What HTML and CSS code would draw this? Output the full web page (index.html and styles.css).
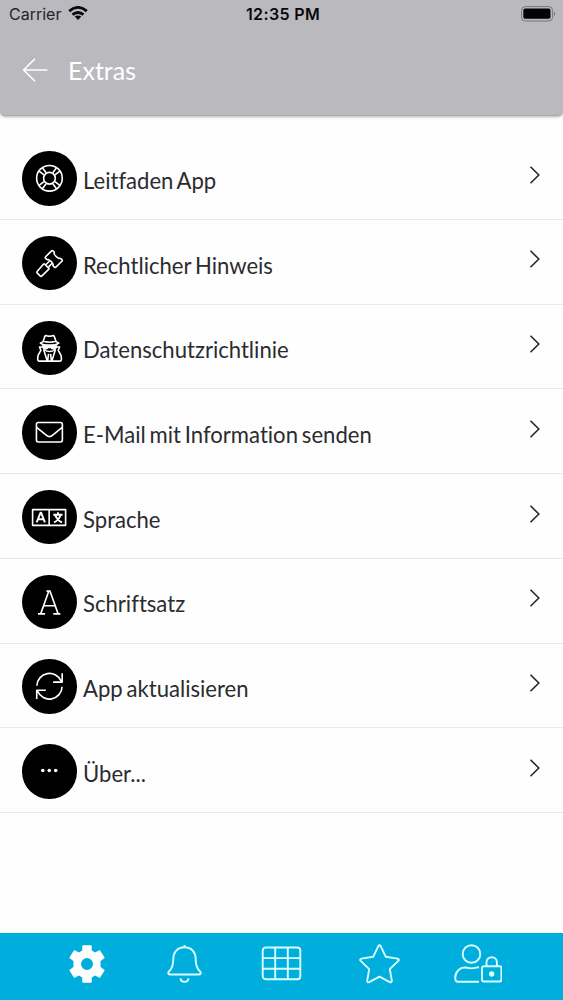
FILE: index.html
```html
<!DOCTYPE html>
<html lang="de">
<head>
<meta charset="utf-8">
<title>Extras</title>
<link rel="stylesheet" href="styles.css">
</head>
<body>
<div class="app">
  <header class="header">
    <div class="status">
      <div class="carrier"><span>Carrier</span>
        <svg width="20" height="15" viewBox="0 0 20 15"><g fill="none" stroke="#08080e" stroke-width="2.8"><path d="M1.2 5.1Q10-2.3 18.8 5.1"/><path d="M4.5 8.7Q10 4.2 15.5 8.7"/></g><path d="M6.7 10.6Q10 8.2 13.3 10.6L10 14z" fill="#08080e"/></svg>
      </div>
      <span class="clock">12:35 PM</span>
      <svg class="battery" width="36" height="16" viewBox="0 0 36 16"><rect x=".6" y=".6" width="31" height="14.4" rx="3.8" fill="none" stroke="#77777d"/><rect x="2.3" y="2.6" width="27.2" height="10.2" rx="1.8" fill="#020207"/><path d="M33 5.5q2 2.3 0 4.6z" fill="#66666c"/></svg>
    </div>
    <div class="titlebar">
      <svg width="26" height="26" viewBox="0 0 26 26" fill="none" stroke="#fff" stroke-width="1.6"><path d="M13 1.8L1.6 13 13 24.2M1.6 13H25.4"/></svg>
      <h1>Extras</h1>
    </div>
  </header>

  <main class="list">
    <a class="row">
      <svg class="icon" viewBox="0 0 54 54"><circle cx="27.2" cy="27" r="12.7"/><circle cx="27.2" cy="27" r="5.8"/><path d="M16.9 20l4.9 3.7M20.2 16.7l3.7 4.9M34.2 16.7l-3.7 4.9M37.5 20l-4.9 3.7M16.9 34l4.9-3.7M20.2 37.3l3.7-4.9M34.2 37.3l-3.7-4.9M37.5 34l-4.9-3.7"/></svg>
      <span class="label">Leitfaden App</span>
      <svg class="chevron" viewBox="0 0 12 20"><path d="M1.5 1.8L9.8 10 1.5 18.2"/></svg>
    </a>
    <a class="row">
      <svg class="icon" viewBox="0 0 54 54"><path d="M29 15l-5.6 5.6q-.7.8 0 1.6l.8.8q.8.7 1.8.3c2.2.8 3.9 2.5 4.9 4.7-.4 1-.2 1.500.3 2l.8.8q.8.7 1.600 0l5.900-5.800q.8-.8 0-1.600l-1-1q-.9-.7-2-.2c-2.100-.9-3.700-2.500-4.700-4.600.4-.9.400-1.500-.3-2.200l-.8-.6q-.9-.6-1.700.2zM27.100 25l-3.200 3.200M29.600 27.300l-3.200 3.300M22.300 27.700l4.100 4.100q.6.700 0 1.300l-6.700 6.400q-.9.900-1.800 0l-2.700-2.700q-.9-.9 0-1.800l6.200-7.200q.5-.5.9-.1z"/></svg>
      <span class="label">Rechtlicher Hinweis</span>
      <svg class="chevron" viewBox="0 0 12 20"><path d="M1.5 1.8L9.8 10 1.5 18.2"/></svg>
    </a>
    <a class="row">
      <svg class="icon" viewBox="0 0 54 54"><path d="M20.800 20.500l1.800-5.200q.7-1.300 2-.7 2.700 1 5.400 0 1.300-.6 2 .7l1.800 5.200q2.200.7 2.600 1.500c-3.500 2.800-14.700 2.800-18.200 0q.4-.8 2.600-1.500zM20.600 19.800q6.700 2.400 13.400 0"/><path d="M20.300 24c.2 3.200 2.700 6.200 7 6.200s6.800-3 7-6.200"/><path d="M21 24.700q6.300-1.200 12.600 0l-.5 2.200q-2.500 1.600-4.500-.7h-2.600q-2 2.300-4.500.7z" fill="#fff"/><path d="M20.300 25.700h-3l1.400 3.300-2.400 4.400q-.7 1.500-.7 3v2.100q0 1.300 1.300 1.300h20.800q1.300 0 1.300-1.300v-2.100q0-1.500-.7-3L35.900 29l1.400-3.300h-3M21.500 28.500l3.600 11.300M33.100 28.500l-3.600 11.300M26.300 32.500l-.8 6.500M28.300 32.500l.8 6.500"/></svg>
      <span class="label">Datenschutzrichtlinie</span>
      <svg class="chevron" viewBox="0 0 12 20"><path d="M1.5 1.8L9.8 10 1.5 18.2"/></svg>
    </a>
    <a class="row">
      <svg class="icon" viewBox="0 0 54 54"><rect x="14.300" y="17.300" width="25.700" height="19.300" rx="1.800"/><path d="M14.500 22.200l9.800 7.800q2.900 2.500 5.800 0l9.700-7.800"/></svg>
      <span class="label">E-Mail mit Information senden</span>
      <svg class="chevron" viewBox="0 0 12 20"><path d="M1.5 1.8L9.8 10 1.5 18.2"/></svg>
    </a>
    <a class="row">
      <svg class="icon" viewBox="0 0 54 54"><path d="M10.500 19.400h32.700v15.600H10.500zM26.900 19.400V35"/><path d="M14.500 32l3.800-9.400h.7L22.700 32M15.900 28.900h5.500M31 24.500h9.200M35.600 22v2.500M38.300 24.800q-1.800 5.200-6.600 7.300M32.900 24.800q2 5.100 6.700 7.300" stroke-width="1.900"/></svg>
      <span class="label">Sprache</span>
      <svg class="chevron" viewBox="0 0 12 20"><path d="M1.5 1.8L9.8 10 1.5 18.2"/></svg>
    </a>
    <a class="row">
      <svg class="icon" viewBox="0 0 54 54"><path d="M18.500 38.500l8-22.500h1.300l8 22.500M21.400 30.500h11.700M15.900 38.500h7M31 38.500h7M24.300 16h3.300"/></svg>
      <span class="label">Schriftsatz</span>
      <svg class="chevron" viewBox="0 0 12 20"><path d="M1.5 1.8L9.8 10 1.5 18.2"/></svg>
    </a>
    <a class="row">
      <svg class="icon" viewBox="0 0 54 54"><path d="M14.700 26.500A12.600 12.600 0 0 1 38.900 22M39.800 14.200v8.700h-9M39.700 27.500A12.600 12.600 0 0 1 15.500 32M14.600 39.700V31h9"/></svg>
      <span class="label">App aktualisieren</span>
      <svg class="chevron" viewBox="0 0 12 20"><path d="M1.5 1.8L9.8 10 1.5 18.2"/></svg>
    </a>
    <a class="row">
      <svg class="icon" viewBox="0 0 54 54"><g fill="#fff" stroke="none"><circle cx="20.600" cy="26.300" r="1.750"/><circle cx="27" cy="26.300" r="1.750"/><circle cx="33.400" cy="26.300" r="1.750"/></g></svg>
      <span class="label">Über...</span>
      <svg class="chevron" viewBox="0 0 12 20"><path d="M1.5 1.8L9.8 10 1.5 18.2"/></svg>
    </a>
  </main>

  <nav class="tabs">
    <svg viewBox="0 0 48 40"><path fill="#fff" fill-rule="evenodd" stroke="#fff" stroke-width="1.500" d="M20 2h8v5l4 2.300 4.500-2.300 4.300 6.600-4 3.100v6.600l4 3.100-4.300 6.600-4.500-2.300L28 33v5h-8v-5l-4-2.300-4.500 2.300-4.300-6.600 4-3.100v-6.600l-4-3.100L11.500 7 16 9.300 20 7zM24 13.300a6.700 6.700 0 1 0 0 13.400 6.700 6.700 0 0 0 0-13.400z"/></svg>
    <svg viewBox="0 0 48 40"><path d="M23.500 1v2.300M23.500 3.300c-7 0-11.200 4.800-11.200 11.600 0 7-1.300 9.600-4.200 12.300-1.700 1.700-.8 3.300 1.500 3.300h27.800c2.300 0 3.200-1.600 1.500-3.300-2.900-2.700-4.200-5.300-4.200-12.300C34.700 8.100 30.500 3.300 23.500 3.300zM19.500 34.300c.5 4.700 7.500 4.700 8 0"/></svg>
    <svg viewBox="0 0 48 40"><rect x="4.700" y="3.500" width="37.600" height="31.800" rx="3"/><path d="M17.200 3.500v31.800M29.800 3.500v31.800M4.700 14.100h37.600M4.700 24.700h37.600"/></svg>
    <svg viewBox="0 0 48 40"><path d="M22.200 2.300q1.300-2 2.600 0l5 10.500 11.700 1.800q2.200.6.800 2.300l-8.500 8.200 2 11.500q0 2.300-2 1.500l-10.300-5.500-10.300 5.500q-2 .8-2-1.500l2-11.500-8.500-8.200q-1.400-1.700.8-2.300l11.700-1.800z"/></svg>
    <svg viewBox="0 0 48 40"><circle cx="17.500" cy="10" r="8.800"/><path d="M25 23.200q-2 0-3 .5-4.500 1.400-9 0C5.500 22.300 1.200 28.400 1.200 34q0 3.800 3 3.800H25"/><rect x="28" y="22.300" width="19.400" height="15.200" rx="2"/><path d="M32.500 22.300v-4c0-6.800 10.400-6.800 10.400 0v4"/><circle cx="37.700" cy="30" r="1.700" fill="#fff"/></svg>
  </nav>
</div>
</body>
</html>
```
FILE: styles.css
```css
* { box-sizing: border-box; }
body { margin: 0; background: #fff; font-family: Lato, sans-serif; }
.app { height: 1000px; display: flex; flex-direction: column; background: #fefefe; }
.header {
  height: 116px;
  background: #bab9be;
  border-bottom: 1px solid #aaaaae;
  border-radius: 0 0 5px 5px;
  box-shadow: 0 1px 3px rgba(0, 0, 0, .3);
}
.status {
  height: 29px;
  padding: 0 6px 0 9px;
  display: grid;
  grid-template-columns: 1fr auto 1fr;
  align-items: center;
  font: 16px/29px Inter, sans-serif;
  color: #08080e;
}
.carrier { display: flex; align-items: center; gap: 7px; color: #25252b; }
.carrier svg { margin-top: -2px; }
.clock { font-weight: 600; letter-spacing: .35px; }
.battery { justify-self: end; margin-top: -2px; }
.titlebar { display: flex; align-items: center; gap: 20px; height: 82px; padding-left: 22px; }
.titlebar h1 { margin: -1px 0 0; font-size: 25px; font-weight: 400; color: #fff; }
.list { flex: 1; padding-top: 19.4px; }
.row {
  display: flex;
  align-items: flex-start;
  height: 84.7px;
  padding: 15.8px 22px 0;
  border-bottom: 1.5px solid #e9e9e9;
}
.icon {
  flex: none;
  width: 54.5px;
  height: 54.5px;
  border-radius: 50%;
  background: #000;
  fill: none;
  stroke: #fff;
  stroke-width: 1.6;
  stroke-linejoin: round;
}
.label {
  flex: 1;
  margin: 15.8px 0 0 6.5px;
  font-size: 22.1px;
  line-height: 28px;
  word-spacing: -1.8px;
  font-variant-ligatures: none;
  color: #2b2b30;
  white-space: nowrap;
}
.chevron { width: 12px; height: 20px; margin-top: 13.6px; fill: none; stroke: #27272b; stroke-width: 1.6; }
.tabs {
  height: 67px;
  padding: 11px 36px 0 38px;
  display: flex;
  justify-content: space-around;
  background: #00aede;
}
.tabs svg { width: 48px; height: 40px; fill: none; stroke: #d9ffff; stroke-width: 1.9; stroke-linejoin: round; }
```
